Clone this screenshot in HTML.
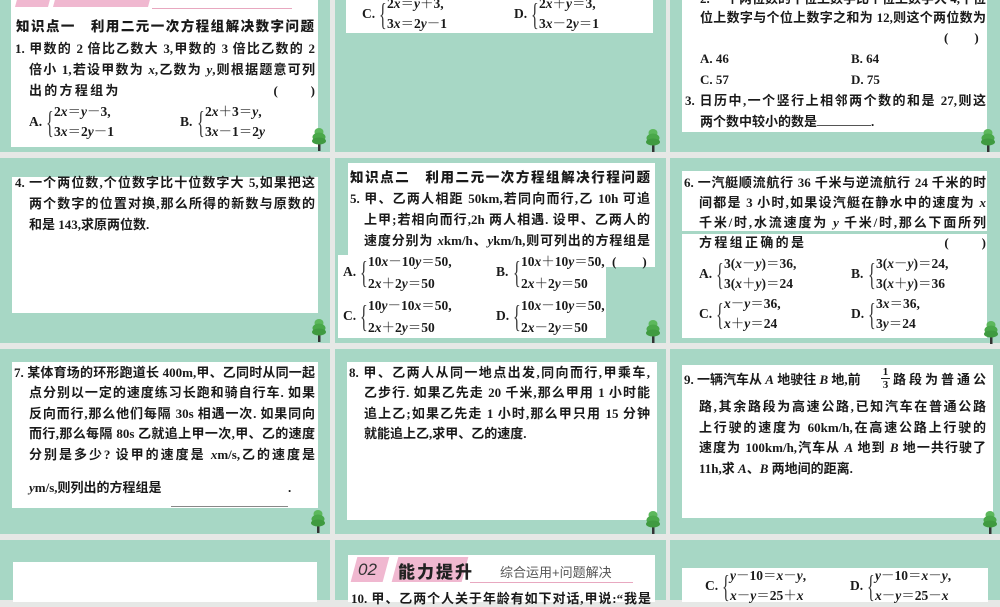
<!DOCTYPE html>
<html><head><meta charset="utf-8">
<style>
*{margin:0;padding:0;box-sizing:border-box}
body{width:1000px;height:600px;background:#e6e8e6;position:relative;overflow:hidden;font-family:"Liberation Serif","Noto Serif CJK SC","Noto Sans CJK SC",serif;color:#1a1a1a}
.tile{position:absolute;background:#a7d7c5}
.w{position:absolute;background:#fff}
.l{position:absolute;white-space:nowrap;font-size:13px;font-weight:bold;line-height:16px;text-align:justify;text-align-last:justify;font-family:"Liberation Serif","Noto Sans CJK SC",serif}
.l.n{text-align-last:left}
.h{font-family:"Liberation Sans","Noto Sans CJK SC",sans-serif;font-weight:900;font-size:13.5px}
i{font-style:italic}
.eq{position:absolute;font-size:13.5px;font-weight:bold;line-height:20px;white-space:nowrap}
.eq .lab{position:absolute;left:0;top:10px}
.eq .br{position:absolute;left:17px;top:0px;font-size:32px;font-weight:normal;transform:scaleX(.5);transform-origin:left;line-height:40px;color:#333}
.eq .ln{position:absolute;left:25px;white-space:nowrap}
.tree{position:absolute;width:16px;height:24px}
</style></head><body>

<div class="tile" style="left:0;top:0;width:330px;height:152px"></div>
<div class="tile" style="left:335px;top:0;width:331px;height:152px"></div>
<div class="tile" style="left:670px;top:0;width:330px;height:152px"></div>
<div class="tile" style="left:0;top:158px;width:330px;height:185px"></div>
<div class="tile" style="left:335px;top:158px;width:331px;height:185px"></div>
<div class="tile" style="left:670px;top:158px;width:330px;height:185px"></div>
<div class="tile" style="left:0;top:349px;width:330px;height:185px"></div>
<div class="tile" style="left:335px;top:349px;width:331px;height:185px"></div>
<div class="tile" style="left:670px;top:349px;width:330px;height:185px"></div>
<div class="tile" style="left:0;top:540px;width:330px;height:60px"></div>
<div class="tile" style="left:335px;top:540px;width:331px;height:60px"></div>
<div class="tile" style="left:670px;top:540px;width:330px;height:60px"></div>

<!-- tile 1 -->
<div class="w" style="left:11px;top:0;width:307px;height:147px"></div>
<div style="position:absolute;left:17px;top:-8px;width:33px;height:15px;background:#f0b8d0;transform:skewX(-15deg)"></div>
<div style="position:absolute;left:55px;top:-8px;width:95px;height:15px;background:#f0b8d0;transform:skewX(-15deg)"></div>
<div style="position:absolute;left:152px;top:8px;width:140px;height:1px;background:#e8a8c0"></div>
<div class="l h" style="left:16px;top:19px;width:298px">知识点一　利用二元一次方程组解决数字问题</div>
<div class="l" style="left:15px;top:41px;width:300px">1. 甲数的 2 倍比乙数大 3,甲数的 3 倍比乙数的 2</div>
<div class="l" style="left:29px;top:62px;width:286px">倍小 1,若设甲数为 <i>x</i>,乙数为 <i>y</i>,则根据题意可列</div>
<div class="l" style="left:29px;top:83px;width:286px">出的方程组为　　　　　　　　　　(　　)</div>
<div class="eq" style="left:29px;top:102px"><span class="lab">A.</span><span class="br">{</span><span class="ln" style="top:0">2<i>x</i>＝<i>y</i>－3,</span><span class="ln" style="top:20px">3<i>x</i>＝2<i>y</i>－1</span></div>
<div class="eq" style="left:180px;top:102px"><span class="lab">B.</span><span class="br">{</span><span class="ln" style="top:0">2<i>x</i>＋3＝<i>y</i>,</span><span class="ln" style="top:20px">3<i>x</i>－1＝2<i>y</i></span></div>

<!-- tile 2 -->
<div class="w" style="left:346px;top:0;width:307px;height:33px"></div>
<div class="eq" style="left:362px;top:-6px"><span class="lab">C.</span><span class="br">{</span><span class="ln" style="top:0">2<i>x</i>＝<i>y</i>＋3,</span><span class="ln" style="top:20px">3<i>x</i>＝2<i>y</i>－1</span></div>
<div class="eq" style="left:514px;top:-6px"><span class="lab">D.</span><span class="br">{</span><span class="ln" style="top:0">2<i>x</i>＋<i>y</i>＝3,</span><span class="ln" style="top:20px">3<i>x</i>－2<i>y</i>＝1</span></div>

<!-- tile 3 -->
<div class="w" style="left:682px;top:0;width:305px;height:132px"></div>
<div class="l" style="left:700px;top:-9px;width:286px">2. 一个两位数的十位上数字比个位上数字大 4,十位</div>
<div class="l" style="left:700px;top:10px;width:286px">位上数字与个位上数字之和为 12,则这个两位数为</div>
<div class="l n" style="left:944px;top:30px">(　　)</div>
<div class="l n" style="left:700px;top:51px">A. 46</div>
<div class="l n" style="left:851px;top:51px">B. 64</div>
<div class="l n" style="left:700px;top:72px">C. 57</div>
<div class="l n" style="left:851px;top:72px">D. 75</div>
<div class="l" style="left:685px;top:93px;width:301px">3. 日历中,一个竖行上相邻两个数的和是 27,则这</div>
<div class="l n" style="left:700px;top:114px">两个数中较小的数是<span style="display:inline-block;width:54px;border-bottom:1px solid #555"></span>.</div>

<!-- tile 4 -->
<div class="w" style="left:12px;top:177px;width:306px;height:136px"></div>
<div class="l" style="left:15px;top:175px;width:300px">4. 一个两位数,个位数字比十位数字大 5,如果把这</div>
<div class="l" style="left:29px;top:196px;width:286px">两个数字的位置对换,那么所得的新数与原数的</div>
<div class="l n" style="left:29px;top:217px">和是 143,求原两位数.</div>

<!-- tile 5 -->
<div class="w" style="left:348px;top:163px;width:307px;height:102px"></div>
<div class="w" style="left:338px;top:255px;width:268px;height:83px"></div>
<div class="w" style="left:600px;top:255px;width:55px;height:12px"></div>
<div class="l h" style="left:350px;top:170px;width:300px">知识点二　利用二元一次方程组解决行程问题</div>
<div class="l" style="left:350px;top:191px;width:300px">5. 甲、乙两人相距 50km,若同向而行,乙 10h 可追</div>
<div class="l" style="left:364px;top:212px;width:286px">上甲;若相向而行,2h 两人相遇. 设甲、乙两人的</div>
<div class="l" style="left:364px;top:233px;width:286px">速度分别为 <i>x</i>km/h、<i>y</i>km/h,则可列出的方程组是</div>
<div class="l n" style="left:612px;top:254px">(　　)</div>
<div class="eq" style="left:343px;top:252px"><span class="lab">A.</span><span class="br">{</span><span class="ln" style="top:0">10<i>x</i>－10<i>y</i>＝50,</span><span class="ln" style="top:22px">2<i>x</i>＋2<i>y</i>＝50</span></div>
<div class="eq" style="left:496px;top:252px"><span class="lab">B.</span><span class="br">{</span><span class="ln" style="top:0">10<i>x</i>＋10<i>y</i>＝50,</span><span class="ln" style="top:22px">2<i>x</i>＋2<i>y</i>＝50</span></div>
<div class="eq" style="left:343px;top:296px"><span class="lab">C.</span><span class="br">{</span><span class="ln" style="top:0">10<i>y</i>－10<i>x</i>＝50,</span><span class="ln" style="top:22px">2<i>x</i>＋2<i>y</i>＝50</span></div>
<div class="eq" style="left:496px;top:296px"><span class="lab">D.</span><span class="br">{</span><span class="ln" style="top:0">10<i>x</i>－10<i>y</i>＝50,</span><span class="ln" style="top:22px">2<i>x</i>－2<i>y</i>＝50</span></div>

<!-- tile 6 -->
<div class="w" style="left:682px;top:171px;width:305px;height:60px"></div>
<div class="w" style="left:682px;top:234px;width:305px;height:104px"></div>
<div class="l" style="left:684px;top:175px;width:302px">6. 一汽艇顺流航行 36 千米与逆流航行 24 千米的时</div>
<div class="l" style="left:699px;top:195px;width:287px">间都是 3 小时,如果设汽艇在静水中的速度为 <i>x</i></div>
<div class="l" style="left:699px;top:215px;width:287px">千米/时,水流速度为 <i>y</i> 千米/时,那么下面所列</div>
<div class="l" style="left:699px;top:235px;width:287px">方程组正确的是　　　　　　　　　(　　)</div>
<div class="eq" style="left:699px;top:254px"><span class="lab">A.</span><span class="br">{</span><span class="ln" style="top:0">3(<i>x</i>－<i>y</i>)＝36,</span><span class="ln" style="top:20px">3(<i>x</i>＋<i>y</i>)＝24</span></div>
<div class="eq" style="left:851px;top:254px"><span class="lab">B.</span><span class="br">{</span><span class="ln" style="top:0">3(<i>x</i>－<i>y</i>)＝24,</span><span class="ln" style="top:20px">3(<i>x</i>＋<i>y</i>)＝36</span></div>
<div class="eq" style="left:699px;top:294px"><span class="lab">C.</span><span class="br">{</span><span class="ln" style="top:0"><i>x</i>－<i>y</i>＝36,</span><span class="ln" style="top:20px"><i>x</i>＋<i>y</i>＝24</span></div>
<div class="eq" style="left:851px;top:294px"><span class="lab">D.</span><span class="br">{</span><span class="ln" style="top:0">3<i>x</i>＝36,</span><span class="ln" style="top:20px">3<i>y</i>＝24</span></div>

<!-- tile 7 -->
<div class="w" style="left:12px;top:362px;width:306px;height:146px"></div>
<div class="l" style="left:14px;top:365px;width:301px">7. 某体育场的环形跑道长 400m,甲、乙同时从同一起</div>
<div class="l" style="left:29px;top:385px;width:286px">点分别以一定的速度练习长跑和骑自行车. 如果</div>
<div class="l" style="left:29px;top:406px;width:286px">反向而行,那么他们每隔 30s 相遇一次. 如果同向</div>
<div class="l" style="left:29px;top:426px;width:286px">而行,那么每隔 80s 乙就追上甲一次,甲、乙的速度</div>
<div class="l" style="left:29px;top:447px;width:286px">分别是多少? 设甲的速度是 <i>x</i>m/s,乙的速度是</div>
<div class="l n" style="left:29px;top:480px"><i>y</i>m/s,则列出的方程组是</div>
<div class="l n" style="left:288px;top:480px">.</div>
<div style="position:absolute;left:171px;top:506px;width:117px;height:1px;background:#888"></div>

<!-- tile 8 -->
<div class="w" style="left:347px;top:362px;width:310px;height:158px"></div>
<div class="l" style="left:349px;top:365px;width:301px">8. 甲、乙两人从同一地点出发,同向而行,甲乘车,</div>
<div class="l" style="left:364px;top:385px;width:286px">乙步行. 如果乙先走 20 千米,那么甲用 1 小时能</div>
<div class="l" style="left:364px;top:406px;width:286px">追上乙;如果乙先走 1 小时,那么甲只用 15 分钟</div>
<div class="l n" style="left:364px;top:426px">就能追上乙,求甲、乙的速度.</div>

<!-- tile 9 -->
<div class="w" style="left:682px;top:365px;width:311px;height:153px"></div>
<div class="l n" style="left:684px;top:372px">9. 一辆汽车从 <i>A</i> 地驶往 <i>B</i> 地,前</div>
<div style="position:absolute;left:881px;top:366px;font-size:11px;font-weight:bold;line-height:12px;text-align:center;width:9px">1<div style="border-top:1px solid #222"></div>3</div>
<div class="l" style="left:893px;top:372px;width:93px">路段为普通公</div>
<div class="l" style="left:699px;top:399px;width:287px">路,其余路段为高速公路,已知汽车在普通公路</div>
<div class="l" style="left:699px;top:420px;width:287px">上行驶的速度为 60km/h,在高速公路上行驶的</div>
<div class="l" style="left:699px;top:440px;width:287px">速度为 100km/h,汽车从 <i>A</i> 地到 <i>B</i> 地一共行驶了</div>
<div class="l n" style="left:699px;top:461px">11h,求 <i>A</i>、<i>B</i> 两地间的距离.</div>

<!-- row 4 -->
<div class="w" style="left:13px;top:562px;width:304px;height:40px"></div>
<div class="w" style="left:348px;top:555px;width:307px;height:47px"></div>
<div style="position:absolute;left:354px;top:557px;width:32px;height:25px;background:#f0b8d0;transform:skewX(-15deg)"></div>
<div style="position:absolute;left:395px;top:557px;width:70px;height:25px;background:#f0b8d0;transform:skewX(-15deg)"></div>
<div style="position:absolute;left:358px;top:560px;font-family:'Liberation Sans',sans-serif;font-style:italic;font-size:17px;color:#333">02</div>
<div style="position:absolute;left:398px;top:558px;font-family:'Liberation Sans','Noto Sans CJK SC',sans-serif;font-weight:900;font-size:17px;color:#222;letter-spacing:2px">能力提升</div>
<div style="position:absolute;left:500px;top:562px;font-family:'Liberation Sans','Noto Sans CJK SC',sans-serif;font-size:13px;color:#555">综合运用+问题解决</div>
<div style="position:absolute;left:470px;top:582px;width:163px;height:1px;background:#e8a8c0"></div>
<div class="l" style="left:351px;top:591px;width:300px">10. 甲、乙两个人关于年龄有如下对话,甲说:“我是</div>
<div class="w" style="left:682px;top:568px;width:306px;height:34px"></div>
<div class="eq" style="left:705px;top:566px"><span class="lab">C.</span><span class="br">{</span><span class="ln" style="top:0"><i>y</i>－10＝<i>x</i>－<i>y</i>,</span><span class="ln" style="top:20px"><i>x</i>－<i>y</i>＝25＋<i>x</i></span></div>
<div class="eq" style="left:850px;top:566px"><span class="lab">D.</span><span class="br">{</span><span class="ln" style="top:0"><i>y</i>－10＝<i>x</i>－<i>y</i>,</span><span class="ln" style="top:20px"><i>x</i>－<i>y</i>＝25－<i>x</i></span></div>

<svg width="0" height="0" style="position:absolute"><defs><g id="tr"><rect x="7" y="14" width="2.5" height="10" fill="#333"/><ellipse cx="8" cy="5" rx="4.5" ry="4" fill="#5cb85c"/><ellipse cx="8" cy="10" rx="6.5" ry="4.5" fill="#4aa84a"/><ellipse cx="8" cy="14" rx="7" ry="3.5" fill="#3f9a40"/></g></defs></svg>
<svg class="tree" style="left:311px;top:127px"><use href="#tr"/></svg>
<svg class="tree" style="left:645px;top:128px"><use href="#tr"/></svg>
<svg class="tree" style="left:980px;top:128px"><use href="#tr"/></svg>
<svg class="tree" style="left:311px;top:318px"><use href="#tr"/></svg>
<svg class="tree" style="left:645px;top:319px"><use href="#tr"/></svg>
<svg class="tree" style="left:983px;top:320px"><use href="#tr"/></svg>
<svg class="tree" style="left:310px;top:509px"><use href="#tr"/></svg>
<svg class="tree" style="left:645px;top:510px"><use href="#tr"/></svg>
<svg class="tree" style="left:982px;top:510px"><use href="#tr"/></svg>
</body></html>
